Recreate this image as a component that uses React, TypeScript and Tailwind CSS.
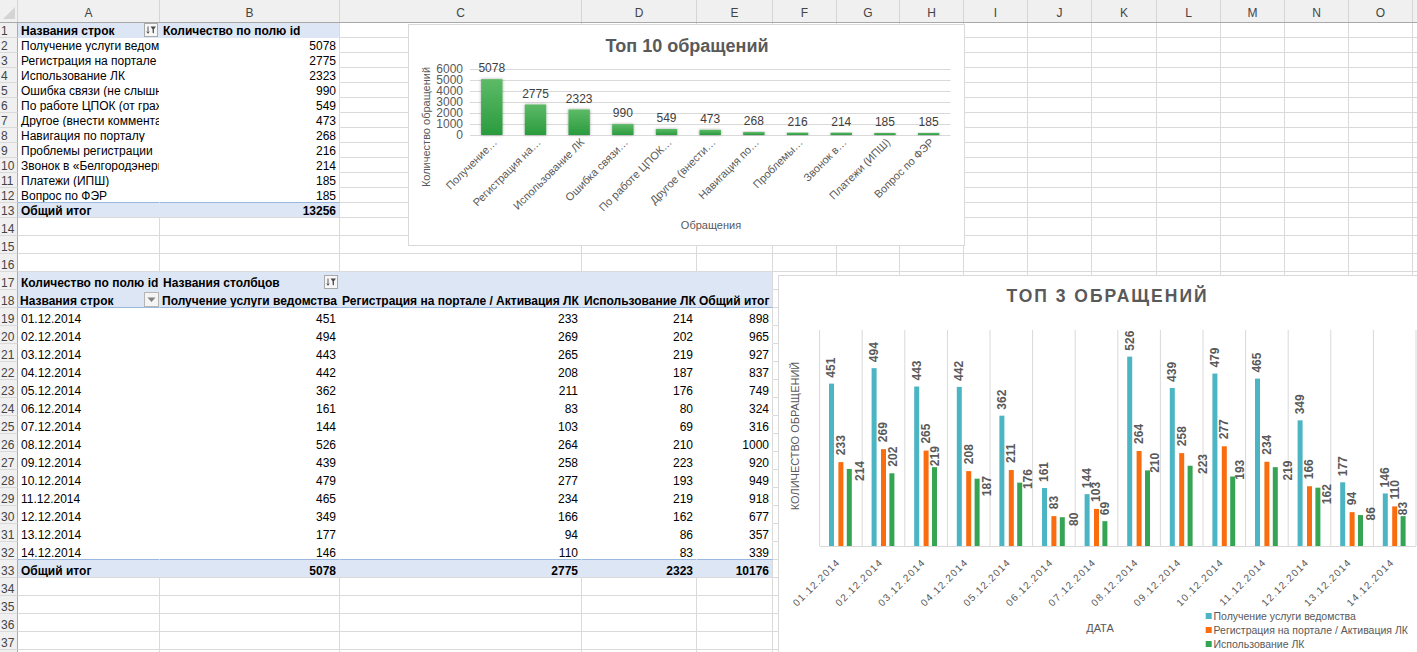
import React from 'react';

type Fill = 'none' | 'white' | 'blue';
type BB = 'grid' | 'none' | 'blue';
interface CellSpec {
  t?: React.ReactNode;
  right?: boolean;
  bold?: boolean;
  fill?: Fill;
  bb?: BB;
  br?: 'grid' | 'none';
  tight?: boolean;
}

const COLS: { l: string; w: string }[] = [
  { l: 'A', w: 'w-[142px]' },
  { l: 'B', w: 'w-[180px]' },
  { l: 'C', w: 'w-[242px]' },
  { l: 'D', w: 'w-[115px]' },
  { l: 'E', w: 'w-[76px]' },
  { l: 'F', w: 'w-[64px]' },
  { l: 'G', w: 'w-[63px]' },
  { l: 'H', w: 'w-[64px]' },
  { l: 'I', w: 'w-[64px]' },
  { l: 'J', w: 'w-[64px]' },
  { l: 'K', w: 'w-[65px]' },
  { l: 'L', w: 'w-[64px]' },
  { l: 'M', w: 'w-[64px]' },
  { l: 'N', w: 'w-[64px]' },
  { l: 'O', w: 'w-[64px]' },
  { l: '', w: 'w-[64px]' },
];

const TOP: [string, number][] = [
  ['Получение услуги ведомства', 5078],
  ['Регистрация на портале / Активация ЛК', 2775],
  ['Использование ЛК', 2323],
  ['Ошибка связи (не слышно абонента)', 990],
  ['По работе ЦПОК (от граждан)', 549],
  ['Другое (внести комментарий)', 473],
  ['Навигация по порталу', 268],
  ['Проблемы регистрации', 216],
  ['Звонок в «Белгородэнергосбыт»', 214],
  ['Платежи (ИПШ)', 185],
  ['Вопрос по ФЭР', 185],
];

const TOP_SHORT = [
  'Получение…',
  'Регистрация на…',
  'Использование ЛК',
  'Ошибка связи…',
  'По работе ЦПОК…',
  'Другое (внести…',
  'Навигация по…',
  'Проблемы…',
  'Звонок в…',
  'Платежи (ИПШ)',
  'Вопрос по ФЭР',
];

const DAYS = [
  '01.12.2014', '02.12.2014', '03.12.2014', '04.12.2014', '05.12.2014', '06.12.2014', '07.12.2014',
  '08.12.2014', '09.12.2014', '10.12.2014', '11.12.2014', '12.12.2014', '13.12.2014', '14.12.2014',
];
const S1 = [451, 494, 443, 442, 362, 161, 144, 526, 439, 479, 465, 349, 177, 146];
const S2 = [233, 269, 265, 208, 211, 83, 103, 264, 258, 277, 234, 166, 94, 110];
const S3 = [214, 202, 219, 187, 176, 80, 69, 210, 223, 193, 219, 162, 86, 83];
const TOT = [898, 965, 927, 837, 749, 324, 316, 1000, 920, 949, 918, 677, 357, 339];

// green label placement: [dx, mode, value]
const GREEN_LBL: [number, 'a' | 'm', number][] = [
  [11, 'm', 2],
  [0.7, 'a', 6.6],
  [0.6, 'a', 1],
  [10.2, 'm', 7.5],
  [8.5, 'm', -3.6],
  [11.6, 'm', 2],
  [0.4, 'a', 6],
  [7.2, 'm', -7.6],
  [12.8, 'm', -1.7],
  [7.7, 'm', -6.8],
  [12.9, 'm', 3.3],
  [9.1, 'm', 6.5],
  [10.9, 'm', -1.2],
  [0, 'a', 1],
];

const FF = 'Liberation Sans, Arial, sans-serif';

function FilterBtn() {
  return (
    <span className="flex h-[14px] w-[14px] shrink-0 items-center justify-center border border-[#a9a9a9] bg-[#f7f7f7]">
      <svg width="12" height="12" viewBox="0 0 12 12">
        <path d="M3 2.5 V9" stroke="#555" strokeWidth="1" />
        <path d="M1.8 7.6 L3 9.3 L4.2 7.6" stroke="#555" strokeWidth="1" fill="none" />
        <path d="M5.5 2.5 H11 L8.9 5.3 V9.6 L7.6 8.8 V5.3 Z" fill="#4a4a4a" />
      </svg>
    </span>
  );
}

function DropBtn() {
  return (
    <span className="flex h-[15px] w-[15px] shrink-0 items-center justify-center border border-[#b5b5b5] bg-[#f4f4f4]">
      <svg width="9" height="6" viewBox="0 0 9 6">
        <path d="M0.5 0.5 H8.5 L4.5 5 Z" fill="#808080" />
      </svg>
    </span>
  );
}

function WithBtn({ text, btn }: { text: string; btn: React.ReactNode }) {
  return (
    <span className="flex w-full items-end justify-between">
      <span>{text}</span>
      <span className="-mr-[2px]">{btn}</span>
    </span>
  );
}

function spec(r: number, c: number): CellSpec {
  if (r >= 1 && r <= 13 && c <= 1) {
    if (r === 1) {
      return c === 0
        ? { t: <WithBtn text="Названия строк" btn={<FilterBtn />} />, bold: true, fill: 'blue', bb: 'none', br: 'none' }
        : { t: 'Количество по полю id', bold: true, fill: 'blue', bb: 'none', br: 'grid' };
    }
    if (r === 13) {
      return c === 0
        ? { t: 'Общий итог', bold: true, fill: 'blue', br: 'none' }
        : { t: '13256', bold: true, right: true, fill: 'blue' };
    }
    const [name, v] = TOP[r - 2];
    const bb: BB = r === 12 ? 'blue' : 'none';
    return c === 0
      ? { t: name, fill: 'white', bb, br: 'none' }
      : { t: String(v), right: true, fill: 'white', bb };
  }
  if (r >= 17 && r <= 33 && c <= 4) {
    const br = c === 4 ? 'grid' : 'none';
    if (r === 17) {
      const t =
        c === 0 ? 'Количество по полю id' : c === 1 ? <WithBtn text="Названия столбцов" btn={<FilterBtn />} /> : '';
      return { t, bold: true, fill: 'blue', bb: 'none', br };
    }
    if (r === 18) {
      const t =
        c === 0 ? (
          <WithBtn text="Названия строк" btn={<DropBtn />} />
        ) : c === 1 ? (
          'Получение услуги ведомства'
        ) : c === 2 ? (
          'Регистрация на портале / Активация ЛК'
        ) : c === 3 ? (
          'Использование ЛК'
        ) : (
          'Общий итог'
        );
      return { t, bold: true, fill: 'blue', bb: 'blue', br, tight: true };
    }
    if (r === 33) {
      const vals = ['Общий итог', '5078', '2775', '2323', '10176'];
      return { t: vals[c], bold: true, fill: 'blue', right: c > 0, br };
    }
    const i = r - 19;
    const vals = [DAYS[i], String(S1[i]), String(S2[i]), String(S3[i]), String(TOT[i])];
    return { t: vals[c], fill: 'white', right: c > 0, bb: r === 32 ? 'blue' : 'none', br };
  }
  return {};
}

function Cell({ w, s }: { w: string; s: CellSpec }) {
  const fill = s.fill ?? 'none';
  const bg = fill === 'blue' ? 'bg-[#dce6f5]' : 'bg-white';
  const bb = s.bb ?? 'grid';
  const bbc =
    bb === 'grid'
      ? 'border-b-[#dadada]'
      : bb === 'blue'
      ? 'border-b-[#9ab7dd]'
      : fill === 'blue'
      ? 'border-b-[#dce6f5]'
      : 'border-b-white';
  const br = s.br ?? 'grid';
  const brc = br === 'grid' ? 'border-r-[#dadada]' : fill === 'blue' ? 'border-r-[#dce6f5]' : 'border-r-white';
  return (
    <div
      className={`${w} flex h-full shrink-0 items-end overflow-hidden whitespace-nowrap border-r border-b leading-[12px] ${bg} ${bbc} ${brc} ${
        s.tight ? 'px-[2px]' : 'px-[3px]'
      } ${s.right ? 'justify-end' : ''} ${s.bold ? 'font-bold' : ''}`}
    >
      {s.t}
    </div>
  );
}

function Chart1() {
  const base = 111;
  const k = 0.011;
  const x0 = 83.8;
  const step = 43.68;
  const bw = 21.4;
  const plotL = x0 - step / 2;
  const plotR = plotL + step * 11;
  return (
    <div className="absolute left-[408px] top-[24px] h-[222px] w-[557px] border border-[#d9d9d9] bg-white">
      <svg width="557" height="222" className="absolute -left-px -top-px" fontFamily={FF}>
        <defs>
          <linearGradient id="gbar" x1="0" y1="0" x2="0" y2="1">
            <stop offset="0" stopColor="#5dba67" />
            <stop offset="1" stopColor="#2a9b3e" />
          </linearGradient>
          <filter id="sh" x="-40%" y="-20%" width="180%" height="140%">
            <feDropShadow dx="0" dy="0" stdDeviation="1.4" floodColor="#000" floodOpacity="0.35" />
          </filter>
        </defs>
        <text x="279" y="27.5" textAnchor="middle" fontSize="18" fontWeight="bold" fill="#595959">
          Топ 10 обращений
        </text>
        {[0, 1, 2, 3, 4, 5, 6].map((g) => {
          const y = base - g * 11;
          return (
            <g key={g}>
              <line x1={plotL} x2={plotR} y1={y + 0.5} y2={y + 0.5} stroke="#d9d9d9" strokeWidth="1" />
              <text x="55" y={y + 4.3} textAnchor="end" fontSize="12" fill="#595959">
                {g * 1000}
              </text>
            </g>
          );
        })}
        <text
          x="18"
          y="103"
          transform="rotate(-90 18 103)"
          textAnchor="middle"
          dominantBaseline="central"
          fontSize="11"
          fill="#595959"
        >
          Количество обращений
        </text>
        {TOP.map(([, v], i) => {
          const cx = x0 + i * step;
          const h = v * k;
          const top = base - h;
          return (
            <g key={i}>
              <rect x={cx - bw / 2} y={top} width={bw} height={h} fill="url(#gbar)" filter="url(#sh)" />
              <text x={cx} y={top - 6.7} textAnchor="middle" fontSize="12" fill="#404040">
                {v}
              </text>
              <text
                x={cx + 6}
                y={119}
                transform={`rotate(-45 ${cx + 6} 119)`}
                textAnchor="end"
                fontSize="11"
                fill="#595959"
              >
                {TOP_SHORT[i]}
              </text>
            </g>
          );
        })}
        <text x="303" y="205" textAnchor="middle" fontSize="11" fill="#595959">
          Обращения
        </text>
      </svg>
    </div>
  );
}

function Chart2() {
  const L = 41.6;
  const gw = 42.6;
  const top = 55;
  const base = 271;
  const s = 0.36;
  const bw = 5;
  const teal = '#4bb5c3';
  const orange = '#f96d0e';
  const green = '#36a553';
  return (
    <div className="absolute left-[778px] top-[275px] h-[400px] w-[660px] border border-[#d9d9d9] bg-white">
      <svg width="660" height="400" className="absolute -left-px -top-px" fontFamily={FF}>
        <text x="329.5" y="26.5" textAnchor="middle" fontSize="17.5" fontWeight="bold" fill="#595959" letterSpacing="2">
          ТОП 3 ОБРАЩЕНИЙ
        </text>
        <text
          x="17"
          y="161"
          transform="rotate(-90 17 161)"
          textAnchor="middle"
          dominantBaseline="central"
          fontSize="11"
          fill="#595959"
        >
          КОЛИЧЕСТВО ОБРАЩЕНИЙ
        </text>
        {Array.from({ length: 15 }).map((_, i) => (
          <line key={i} x1={L + i * gw} x2={L + i * gw} y1={top} y2={base} stroke="#d9d9d9" strokeWidth="1" />
        ))}
        <line x1={L} x2={L + 14 * gw} y1={base + 0.5} y2={base + 0.5} stroke="#d9d9d9" strokeWidth="1" />
        {DAYS.map((d, i) => {
          const g = L + i * gw;
          const vals = [S1[i], S2[i], S3[i]];
          const xs = [g + 9.4, g + 18.8, g + 27.2];
          const cols = [teal, orange, green];
          const gc = g + gw / 2;
          const [gdx, gmode, gval] = GREEN_LBL[i];
          return (
            <g key={d}>
              {vals.map((v, j) => {
                const h = v * s;
                return <rect key={j} x={xs[j]} y={base - h} width={bw} height={h} fill={cols[j]} />;
              })}
              {[0, 1].map((j) => {
                const cx = xs[j] + bw / 2;
                const y = base - vals[j] * s - (j === 0 ? 6 : 7);
                return (
                  <text
                    key={j}
                    x={cx}
                    y={y}
                    transform={`rotate(-90 ${cx} ${y})`}
                    textAnchor="start"
                    dominantBaseline="central"
                    fontSize="12"
                    fontWeight="bold"
                    fill="#595959"
                  >
                    {vals[j]}
                  </text>
                );
              })}
              {(() => {
                const cx = xs[2] + bw / 2 + gdx;
                const t = base - vals[2] * s;
                const y = gmode === 'a' ? t - gval : t + gval;
                return (
                  <text
                    x={cx}
                    y={y}
                    transform={`rotate(-90 ${cx} ${y})`}
                    textAnchor={gmode === 'a' ? 'start' : 'middle'}
                    dominantBaseline="central"
                    fontSize="12"
                    fontWeight="bold"
                    fill="#595959"
                  >
                    {vals[2]}
                  </text>
                );
              })()}
              <text
                x={gc}
                y={288}
                transform={`rotate(-45 ${gc} 288)`}
                textAnchor="end"
                fontSize="10"
                letterSpacing="1.2"
                fill="#595959"
              >
                {d}
              </text>
            </g>
          );
        })}
        <text x="322" y="357" textAnchor="middle" fontSize="11" fill="#595959">
          ДАТА
        </text>
        {[
          ['Получение услуги ведомства', teal],
          ['Регистрация на портале / Активация ЛК', orange],
          ['Использование ЛК', green],
        ].map(([label, col], i) => {
          const cy = 341 + i * 14;
          return (
            <g key={label}>
              <rect x="427.7" y={cy - 3} width="6" height="6" fill={col} />
              <text x="435.5" y={cy + 3.8} fontSize="10.5" fill="#595959">
                {label}
              </text>
            </g>
          );
        })}
      </svg>
    </div>
  );
}

export default function App() {
  const rows = Array.from({ length: 38 }, (_, i) => i + 1);
  return (
    <div className="relative h-[652px] w-[1417px] overflow-hidden bg-white font-['Liberation_Sans',Arial,sans-serif] text-[12px] text-black">
      <div className="flex h-[23px] border-b border-[#a8a8a8] bg-[#f0f0f0]">
        <div className="relative h-full w-[18px] shrink-0 border-r border-[#d5d5d5]">
          <svg width="18" height="22" className="absolute left-0 top-0">
            <path d="M15 7 V19 H3 Z" fill="#d4d4d4" />
          </svg>
        </div>
        {COLS.map((c, i) => (
          <div
            key={i}
            className={`${c.w} flex h-full shrink-0 items-end justify-center border-r border-[#d5d5d5] pb-[2px] leading-[14px] text-[#444]`}
          >
            {c.l}
          </div>
        ))}
      </div>
      {rows.map((r) => (
        <div key={r} className={`flex ${r <= 13 ? 'h-[15px]' : 'h-[18px]'}`}>
          <div className="flex h-full w-[18px] shrink-0 items-end border-r border-b border-r-[#ababab] border-b-[#dadada] bg-[#f0f0f0] pl-[1px] leading-[12px] text-[#444]">
            {r}
          </div>
          {COLS.map((c, ci) => (
            <Cell key={ci} w={c.w} s={spec(r, ci)} />
          ))}
        </div>
      ))}
      <Chart1 />
      <Chart2 />
    </div>
  );
}
